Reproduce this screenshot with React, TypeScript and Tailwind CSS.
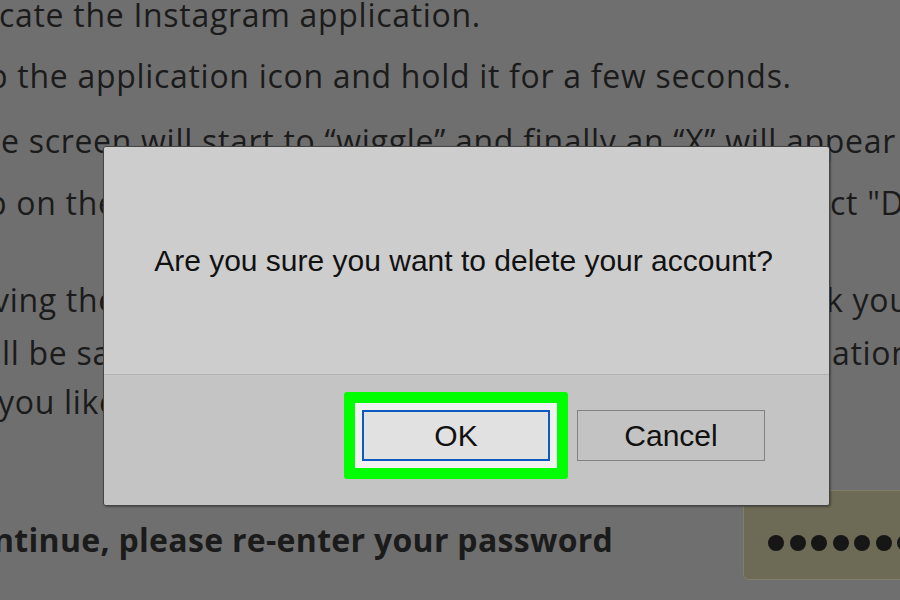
import React from "react";

const bgFont = { fontFamily: '"Open Sans", "Noto Sans", sans-serif' };

export default function App() {
  return (
    <div
      className="relative w-[900px] h-[600px] overflow-hidden bg-[#6f6f6f] text-[#1b1b1b]"
      style={bgFont}
    >
      {/* instructions behind the dialog */}
      <div className="flex flex-col text-[32px] tracking-[0.7px] whitespace-nowrap">
        <div className="h-[40px] leading-[40px] mt-[-5px] -ml-[1px]">cate the Instagram application.</div>
        <div className="h-[40px] leading-[40px] mt-[21px] -ml-[12px]">p the application icon and hold it for a few seconds.</div>
        <div className="h-[40px] leading-[40px] mt-[25px] ml-[1px]">
          e screen will start to “wiggle” and finally an “X” will appear
        </div>
        <div className="flex h-[40px] leading-[40px] mt-[22px]">
          <span className="-ml-[13px]">p on the “X” and then sele</span>
          <span className="ml-auto w-[70px] shrink-0">ct "Delete".</span>
        </div>
        <div className="flex h-[40px] leading-[40px] mt-[57px]">
          <span className="-ml-[7px]">ving the application</span>
          <span className="ml-auto w-[74px] shrink-0">k you</span>
        </div>
        <div className="flex h-[40px] leading-[40px] mt-[13px]">
          <span className="ml-[2px]">ll be saved</span>
          <span className="ml-auto w-[68px] shrink-0">ation</span>
        </div>
        <div className="h-[40px] leading-[40px] mt-[9px] -ml-[2px]">you like</div>

        <div className="flex items-start mt-[68px]">
          <span className="h-[40px] leading-[40px] mt-[30px] -ml-[7px] font-bold tracking-[0.3px]">
            ntinue, please re-enter your password
          </span>
          <div className="ml-auto w-[170px] h-[90px] shrink-0 -mr-[13px] rounded-[6px] border border-[#827e6a] bg-[#6d6a55] flex items-start gap-[5.5px] pl-[24px] pt-[44px]">
            {[0, 1, 2, 3, 4, 5, 6].map((i) => (
              <div key={i} className="w-4 h-4 shrink-0 rounded-full bg-[#161616]" />
            ))}
          </div>
        </div>
      </div>

      {/* confirm dialog */}
      <div
        className="absolute left-[103px] top-[146px] w-[727px] border border-[#454545] rounded-[3px] overflow-hidden shadow-[1px_1px_2px_rgba(0,0,0,0.35)] text-[#111]"
        style={{ fontFamily: '"Liberation Sans", Arial, sans-serif' }}
      >
        <div className="h-[227px] bg-[#cdcdcd] flex items-center justify-center text-[30px] pr-[6px]">
          Are you sure you want to delete your account?
        </div>
        <div className="h-[131px] bg-[#c4c4c4] border-t border-[#b2b2b2] flex justify-end items-center pr-[64px] pb-[10px] gap-[9px] text-[30px]">
          <div className="bg-[#00ff00] p-[11px] rounded-[3px]">
            <div className="bg-[#f1f1f1] p-[7px]">
              <div className="w-[188px] h-[51px] border-2 border-[#0c5ac0] bg-[#e1e1e1] flex items-center justify-center">
                OK
              </div>
            </div>
          </div>
          <div className="w-[188px] h-[51px] border border-[#828282] bg-[#c3c3c3] flex items-center justify-center">
            Cancel
          </div>
        </div>
      </div>
    </div>
  );
}
